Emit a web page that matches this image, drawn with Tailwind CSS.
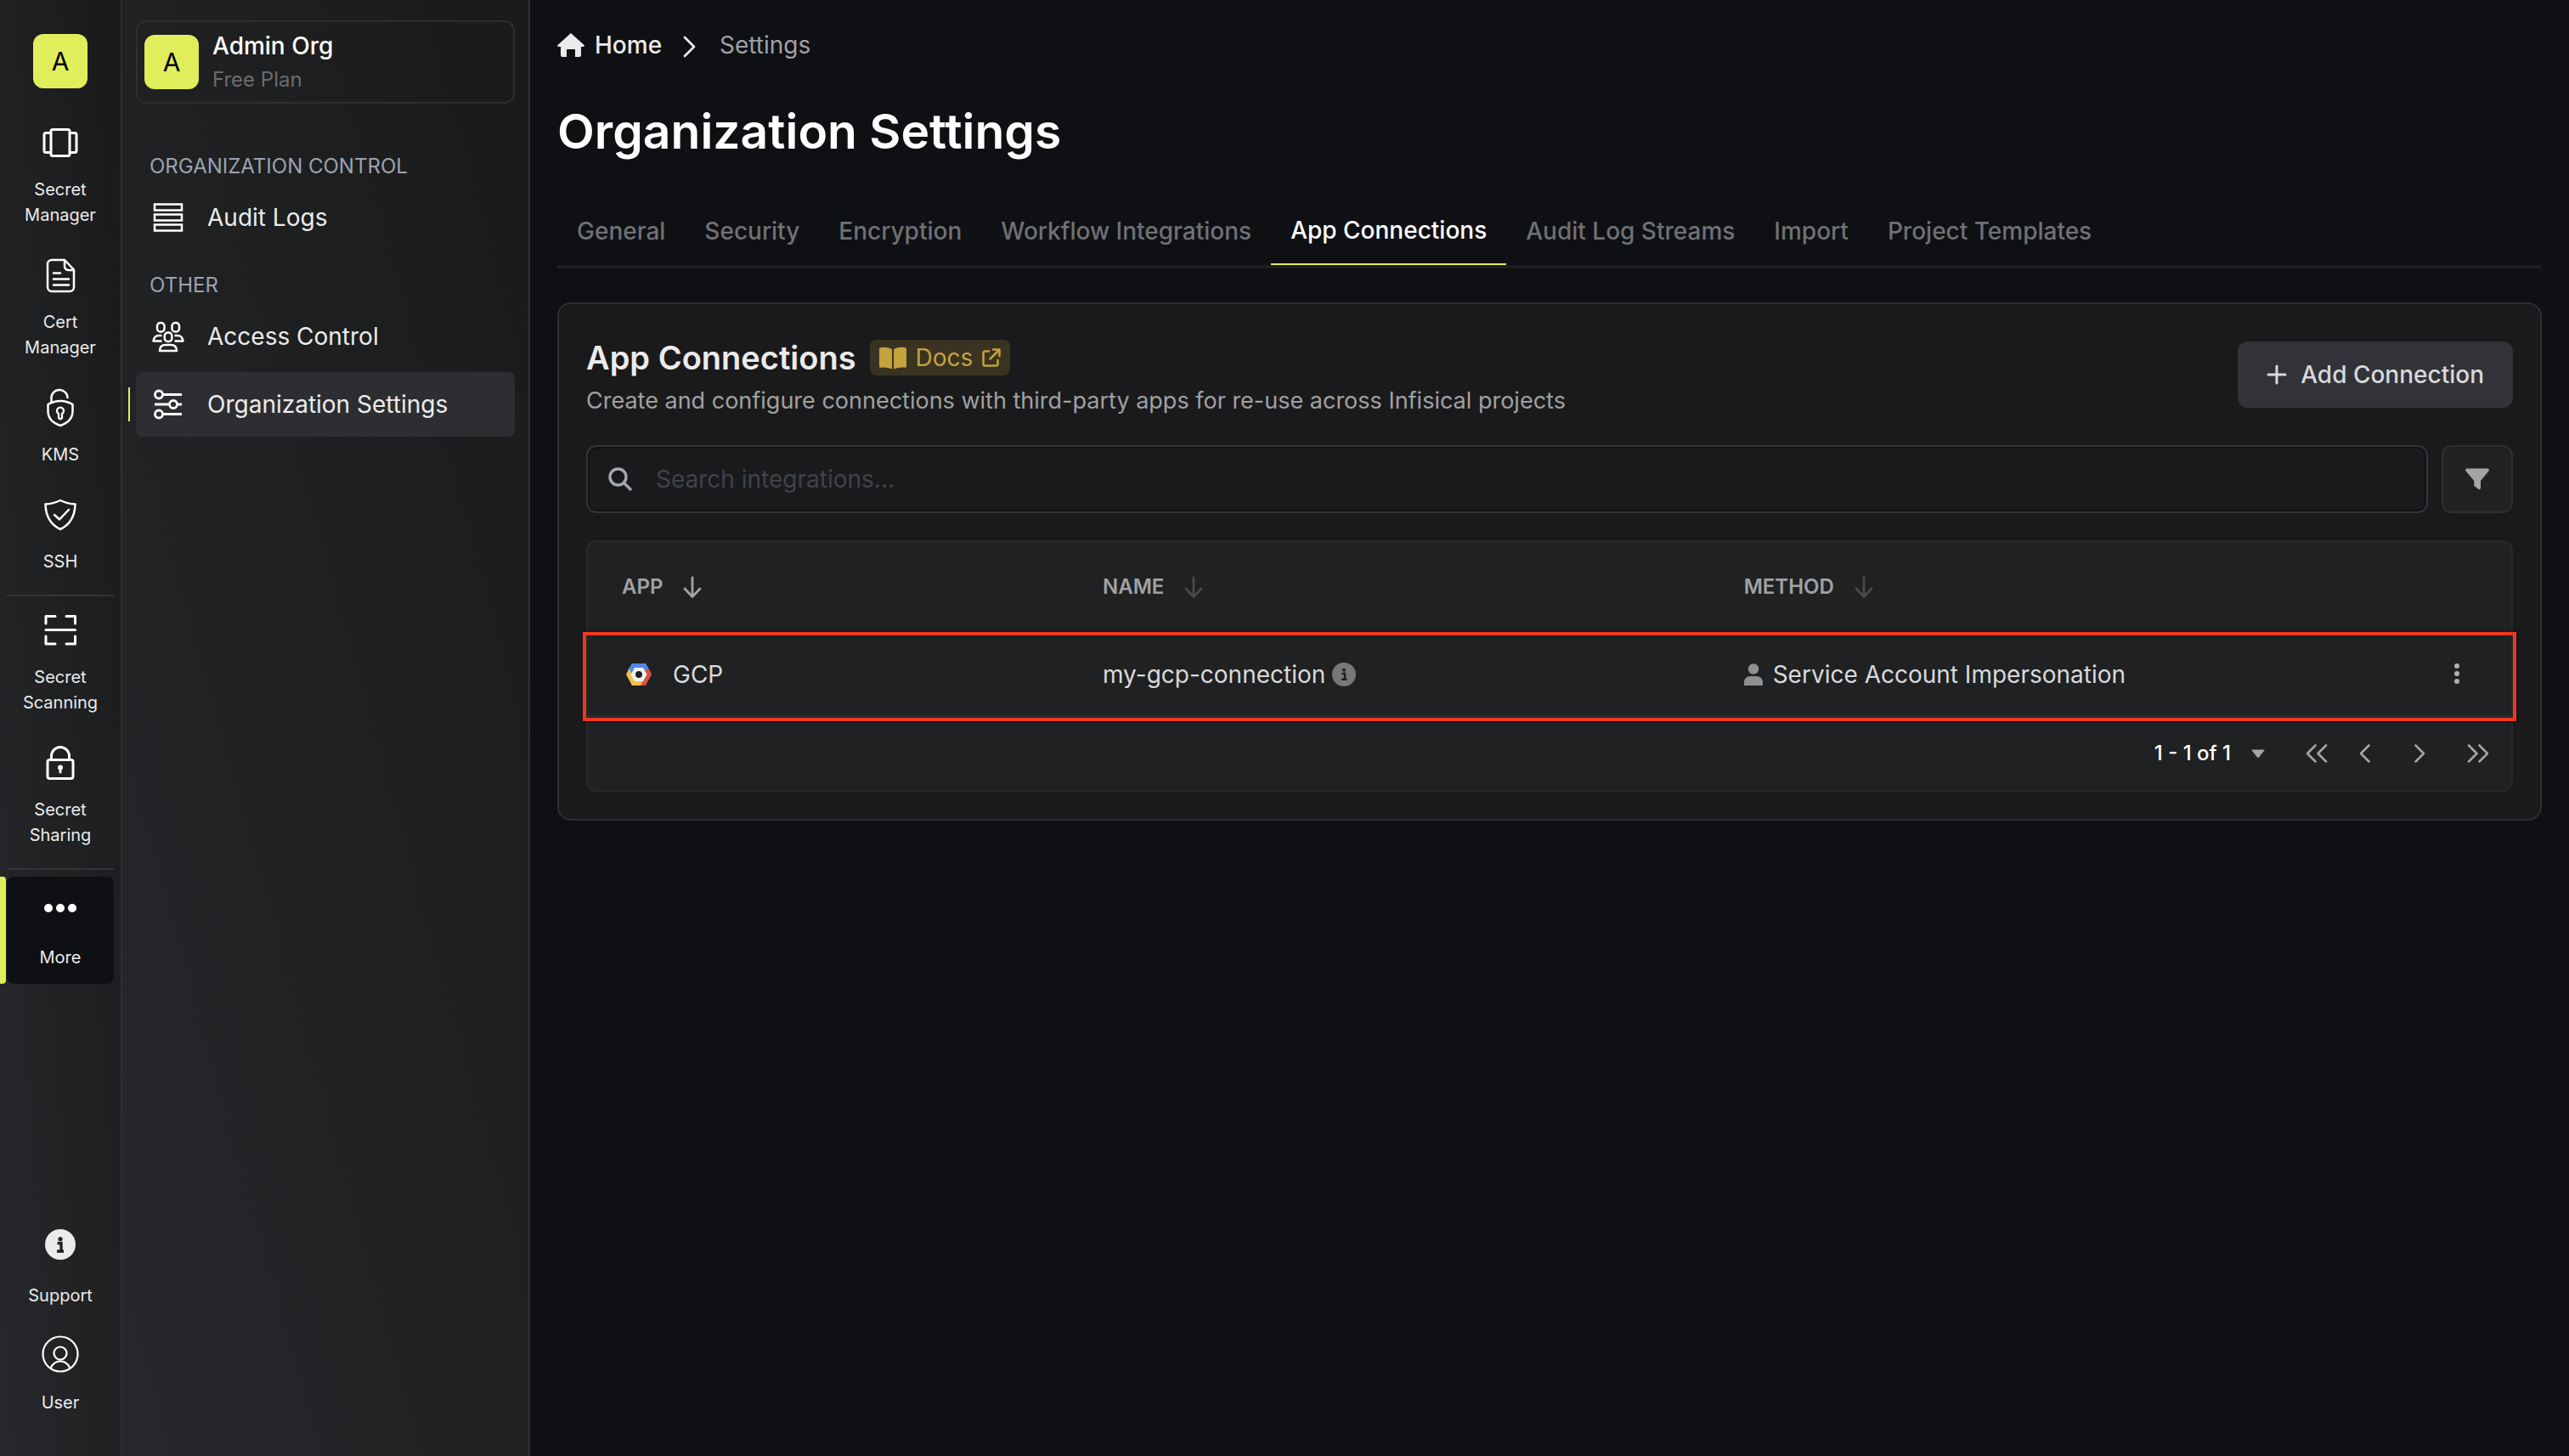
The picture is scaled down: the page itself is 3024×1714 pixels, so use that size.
<!DOCTYPE html>
<html lang="en">
<head>
<meta charset="utf-8">
<title>Organization Settings</title>
<script src="https://cdn.jsdelivr.net/npm/@tailwindcss/browser@4"></script>
</head>
<body class="flex min-h-screen bg-[#0e1014] font-[Inter,sans-serif] text-[28px] leading-[42px] text-[#ebebeb]">

<!-- Product rail -->
<nav aria-label="Products" class="flex w-36 shrink-0 flex-col border-r-2 border-[#2d2f33] bg-linear-to-tr from-[#27282c] via-[#1f2122] to-[#1a1a1b] pt-10 pb-8 text-center text-[20px] leading-[30px]">
  <a href="#" class="mx-auto mb-6 flex size-16 items-center justify-center rounded-xl bg-[#e1ee5c] text-[30px] text-black">A</a>
  <a href="#" class="flex flex-col items-center gap-4 py-4">
    <svg class="size-12" viewBox="0 0 48 48" fill="none" stroke="#fff" stroke-width="3"><rect x="13" y="8.500" width="22" height="31" rx="2"/><path d="M13 12.500H7a2 2 0 0 0-2 2v19a2 2 0 0 0 2 2h6M35 12.500h6a2 2 0 0 1 2 2v19a2 2 0 0 1-2 2h-6"/></svg>
    <span>Secret<br>Manager</span>
  </a>
  <a href="#" class="flex flex-col items-center gap-4 py-4">
    <svg class="size-12" viewBox="0 0 48 48" fill="none" stroke="#fff" stroke-width="2.500" stroke-linecap="round" stroke-linejoin="round"><path d="M29 6H14a5 5 0 0 0-5 5v27a5 5 0 0 0 5 5h21a5 5 0 0 0 5-5V17.500L29 6ZM29 6v8a5 5 0 0 0 5 4h5.500M16 21.500h8M16 28.500h18M16 35.500h18"/></svg>
    <span>Cert<br>Manager</span>
  </a>
  <a href="#" class="flex flex-col items-center gap-4 py-4">
    <svg class="size-12 overflow-visible" viewBox="0 0 48 48" fill="none" stroke="#fff" stroke-width="2.500" stroke-linecap="round" stroke-linejoin="round"><path d="M13.500 18v-5a9.500 9.500 0 0 1 19-1M9.500 20q14.500-8 29 0v8q0 12-14.500 17Q9.500 40 9.500 28Z"/><path d="M22 31v5q2 2.500 4 0v-5a4 4 0 1 0-4 0Z" stroke-width="2.300"/></svg>
    <span>KMS</span>
  </a>
  <a href="#" class="mb-2 flex flex-col items-center gap-4 py-4">
    <svg class="size-12" viewBox="0 0 48 48" fill="none" stroke="#fff" stroke-width="2.500" stroke-linecap="round" stroke-linejoin="round"><path d="M24 7q8 4 17.500 4.500Q41 33 24 41Q7 33 6.500 11.500Q16 11 24 7Z"/><path d="m17 24 6 5.500L34 18"/></svg>
    <span>SSH</span>
  </a>
  <hr class="mx-2 border-t-2 border-[#323439]">
  <a href="#" class="flex flex-col items-center gap-4 py-4">
    <svg class="size-12" viewBox="0 0 48 48" fill="none" stroke="#fff" stroke-width="3" stroke-linecap="round" stroke-linejoin="round"><path d="M7 16V7.500h11M31 7.500h10.500V16M7 31v9h11M31 40h10.500v-9M7 23.500h34.500"/></svg>
    <span>Secret<br>Scanning</span>
  </a>
  <a href="#" class="mb-2 flex flex-col items-center gap-4 py-4">
    <svg class="size-12" viewBox="0 0 48 48" fill="none" stroke="#fff" stroke-width="3"><rect x="9" y="20.500" width="30" height="22" rx="2.500"/><path d="M13.500 20v-4a10.500 10.500 0 0 1 21 0v4"/><path d="M24 29v6" stroke-linecap="round"/><circle cx="24" cy="29.500" r="1.500"/></svg>
    <span>Secret<br>Sharing</span>
  </a>
  <hr class="mx-2 mb-2 border-t-2 border-[#323439]">
  <div class="flex gap-px pr-2">
    <span class="w-[7px] rounded-r-sm bg-[#e1ee5c]"></span>
    <a href="#" class="flex grow flex-col items-center gap-4 rounded-lg bg-[#0e1014] py-4">
      <svg class="size-12" viewBox="0 0 48 48" fill="#fff"><circle cx="10" cy="21" r="5"/><circle cx="24" cy="21" r="5"/><circle cx="38" cy="21" r="5"/></svg>
      <span>More</span>
    </a>
  </div>
  <a href="#" class="mt-auto flex flex-col items-center gap-4 py-4">
    <svg class="size-12" viewBox="0 0 48 48"><circle cx="24" cy="19" r="18" fill="#ebebeb"/><circle cx="24" cy="12.500" r="2.600" fill="#1f2122"/><path d="M20.500 17.500H25v9M20 27h8" fill="none" stroke="#1f2122" stroke-width="3.400"/></svg>
    <span>Support</span>
  </a>
  <a href="#" class="flex flex-col items-center gap-4 py-4">
    <svg class="size-12" viewBox="0 0 48 48" fill="none" stroke="#fff" stroke-width="2.200"><circle cx="24" cy="22" r="20.500"/><circle cx="24" cy="21" r="7.500"/><path d="M12.500 39a12 12 0 0 1 23 0"/></svg>
    <span>User</span>
  </a>
</nav>

<!-- Organization menu -->
<aside class="flex w-[480px] shrink-0 flex-col border-r-2 border-[#2d2f33] bg-linear-to-tr from-[#27282c] via-[#1f2122] to-[#1a1a1b] px-4 pt-6">
  <button type="button" class="flex h-[98px] items-center gap-4 rounded-xl border-2 border-[#2b2f31] px-2 text-left">
    <span class="flex size-16 items-center justify-center rounded-xl bg-[#e1ee5c] text-[30px] text-black">A</span>
    <span class="flex flex-col gap-0.5">
      <span class="leading-10 font-medium text-white">Admin Org</span>
      <span class="text-[24px] leading-9 text-[#6b6c6e]">Free Plan</span>
    </span>
  </button>
  <h2 class="mt-14 px-4 text-[24px] leading-9 text-[#9ca3af]">ORGANIZATION CONTROL</h2>
  <a href="#" class="mt-1 flex h-[76px] items-center gap-7 px-5">
    <svg class="size-9" viewBox="0 0 36 36" fill="none" stroke="#fff" stroke-width="2.500"><path d="M2 2.500h32v7H2zM2 14.500h32v7H2zM2 26.500h32v7H2z"/></svg>
    Audit Logs
  </a>
  <h2 class="mt-6 px-4 text-[24px] leading-9 text-[#9ca3af]">OTHER</h2>
  <a href="#" class="mt-1 flex h-[76px] items-center gap-7 px-5">
    <svg class="size-9 overflow-visible" viewBox="0 0 36 36" fill="none" stroke="#fff" stroke-width="2.500" stroke-linejoin="round"><rect x="5" y="2" width="8.500" height="10.500" rx="3.800"/><rect x="22.500" y="2" width="8.500" height="10.500" rx="3.800"/><rect x="13.800" y="13.500" width="8.500" height="10.500" rx="3.800"/><path d="M10.500 17H7q-5.500 0-6.500 6.500h10M25.500 17H29q5.500 0 6.500 6.500h-10M8 35q0-7 7-7h6q7 0 7 7Z"/></svg>
    Access Control
  </a>
  <a href="#" aria-current="page" class="relative mt-1 flex h-[76px] items-center gap-7 rounded-lg bg-[#2d2e32] px-5">
    <span class="absolute top-[18px] -left-[9px] h-10 w-0.5 bg-[#e1ee5c]"></span>
    <svg class="size-9" viewBox="0 0 36 36" fill="none" stroke="#fff" stroke-width="2.800"><circle cx="7" cy="6.500" r="4.500"/><circle cx="24" cy="18" r="4.500"/><circle cx="7" cy="29.500" r="4.500"/><path d="M11.500 6.500H34M2 18h17.500M28.500 18H34M11.500 29.500H34"/></svg>
    Organization Settings
  </a>
</aside>

<main class="flex min-w-0 grow flex-col px-8 pt-8">
  <nav aria-label="Breadcrumb" class="flex items-center">
    <a href="#" class="flex items-center gap-3 font-medium">
      <svg class="size-8" viewBox="0 0 32 32" fill="#ebebeb"><path d="M16 2 31.500 16q.8 1.800-1 2H28v10q0 2-2 2h-5v-8q0-1-1-1h-8q-1 0-1 1v8H6q-2 0-2-2V18H1.500q-1.800-.2-1-2Z"/></svg>
      Home
    </a>
    <svg class="mx-6 h-8 w-5" viewBox="0 0 20 32" fill="none" stroke="#ebebeb" stroke-width="2.800" stroke-linecap="round" stroke-linejoin="round"><path d="m3 7 11 11L3 29"/></svg>
    <span class="text-[#a0a1a2]">Settings</span>
  </nav>
  <h1 class="mt-9 text-[57px] leading-[90px] font-semibold text-white">Organization Settings</h1>
  <div role="tablist" class="mt-8 flex border-b-4 border-[#1d1e21] font-medium text-[#707174]">
    <button type="button" role="tab" class="h-20 px-[23px]">General</button>
    <button type="button" role="tab" class="h-20 px-[23px]">Security</button>
    <button type="button" role="tab" class="h-20 px-[23px]">Encryption</button>
    <button type="button" role="tab" class="h-20 px-[23px]">Workflow Integrations</button>
    <button type="button" role="tab" aria-selected="true" class="h-20 border-b-2 border-[#e1ee5c] px-[23px] text-white">App Connections</button>
    <button type="button" role="tab" class="h-20 px-[23px]">Audit Log Streams</button>
    <button type="button" role="tab" class="h-20 px-[23px]">Import</button>
    <button type="button" role="tab" class="h-20 px-[23px]">Project Templates</button>
  </div>

  <section class="mt-10 rounded-2xl border-2 border-[#2d2f33] bg-[#1a1a1c] p-8">
    <div class="flex items-center justify-between">
      <div>
        <div class="flex h-[62px] items-center gap-4">
          <h2 class="text-[38px] leading-[60px] font-semibold">App Connections</h2>
          <a href="#" class="flex h-[42px] items-center gap-[11px] rounded-lg bg-[#3a3322] px-[11px] text-[#c4a23c]">
            <svg class="h-7 w-8" viewBox="0 0 32 28" fill="#c4a23c"><path d="M15 4Q9 1 2 2 0 2.300 0 4v20.500Q0 26 2 25.700 9 25 15 27.500ZM17 4q6-3 13-2 2 .3 2 2v20.500q0 1.500-2 1.200-7-.7-13 1.800Z"/></svg>
            Docs
            <svg class="size-[22px]" viewBox="0 0 22 22" fill="none" stroke="#c4a23c" stroke-width="2.500" stroke-linecap="round" stroke-linejoin="round"><path d="M8 3.500H3.500a2 2 0 0 0-2 2v13a2 2 0 0 0 2 2h13a2 2 0 0 0 2-2V14M13 1.500h7.500V9M20 2 9.500 12.500"/></svg>
          </a>
        </div>
        <p class="text-[27px] leading-10 text-[#a0a1a2]">Create and configure connections with third-party apps for re-use across Infisical projects</p>
      </div>
      <button type="button" class="flex h-[78px] items-center gap-4 rounded-xl bg-[#323338] px-[34px] font-medium text-[#d8d9db]">
        <svg class="size-6" viewBox="0 0 24 24" fill="none" stroke="#d8d9db" stroke-width="3" stroke-linecap="round"><path d="M12 2v20M2 12h20"/></svg>
        Add Connection
      </button>
    </div>

    <div class="mt-8 flex gap-4">
      <label class="flex h-20 grow items-center gap-7 rounded-xl border-2 border-[#33343a] px-6 inset-ring-2 inset-ring-[#111115]">
        <svg class="size-7" viewBox="0 0 28 28" fill="none" stroke="#a3a8b0" stroke-width="3.400" stroke-linecap="round"><circle cx="11.500" cy="11.500" r="9.500"/><path d="m18.500 18.500 7.500 7.500"/></svg>
        <input type="text" aria-label="Search integrations" placeholder="Search integrations..." class="grow bg-transparent outline-none placeholder:text-[#41424b]">
      </label>
      <button type="button" aria-label="Filter" class="flex h-20 w-[84px] items-center justify-center rounded-xl border-2 border-[#2d2f31] bg-[#1f2122]">
        <svg class="size-7" viewBox="0 0 28 28" fill="#a3a4a5"><path d="M1.800 1.500h24.400q2.600.8 1.300 3L18 16v8.500q-.5 2.500-2.700 1.300L11 22.500q-.8-.7-.8-1.800V16L.5 4.500q-1.300-2.200 1.300-3Z"/></svg>
      </button>
    </div>

    <div class="relative mt-8 rounded-xl border-2 border-[#27292b] bg-[#1f2122]">
      <!-- Highlight around the connection row -->
      <div class="pointer-events-none absolute -inset-x-1.5 top-[106px] h-[105px] border-4 border-[#f0371f] shadow-[0_0_4px_#0009]"></div>
      <table class="w-full table-fixed text-left">
        <thead>
          <tr class="h-[106px] border-b-2 border-[#1f2e32] text-[24px] leading-9 text-[#a0a1a2]">
            <th class="w-1/4 px-10 font-semibold"><button type="button" class="flex items-center gap-6">APP <svg class="h-7 w-6" viewBox="0 0 24 28" fill="none" stroke="#a3a4a5" stroke-width="2.800" stroke-linecap="round" stroke-linejoin="round"><path d="M11 3v22M2 16l9 9.500 9-9.500"/></svg></button></th>
            <th class="w-1/3 px-10 font-semibold"><button type="button" class="flex items-center gap-6">NAME <svg class="h-7 w-6" viewBox="0 0 24 28" fill="none" stroke="#48494b" stroke-width="2.800" stroke-linecap="round" stroke-linejoin="round"><path d="M11 3v22M2 16l9 9.500 9-9.500"/></svg></button></th>
            <th class="px-10 font-semibold"><button type="button" class="flex items-center gap-6">METHOD <svg class="h-7 w-6" viewBox="0 0 24 28" fill="none" stroke="#48494b" stroke-width="2.800" stroke-linecap="round" stroke-linejoin="round"><path d="M11 3v22M2 16l9 9.500 9-9.500"/></svg></button></th>
            <th class="w-32"></th>
          </tr>
        </thead>
        <tbody>
          <tr class="h-[99px] border-b-2 border-[#293033] text-[#d8d9db]">
            <td class="px-10"><div class="flex items-center gap-5">
              <svg class="size-10" viewBox="0 0 40 40"><path d="M12 7h16l6.500 11.500L28 20 20 14l-7 5-6-4Z" fill="#557ebf"/><path d="M12 7h16l3.500 6-5 4H14l-4 3-1.500-7Z" fill="#4f86ec"/><path d="M31.500 13 35 20l-7 13h-8l7-13-1-4Z" fill="#d9503f"/><path d="M8.500 13 5 20l7 13h10l3-6H15l-3-7Z" fill="#f2c04b"/><path d="M15 12h10l4.500 8L25 28H15l-4.500-8Z" fill="#f1f1f1"/><circle cx="20" cy="20" r="4" fill="#1f2122"/></svg>
              GCP</div></td>
            <td class="px-10"><div class="flex items-center gap-2">my-gcp-connection
              <svg class="size-7" viewBox="0 0 28 28"><circle cx="14" cy="14" r="14" fill="#77787a"/><circle cx="14" cy="8.700" r="2" fill="#1f2122"/><path d="M11.500 13H15v6.500M11 19.800h6.500" fill="none" stroke="#1f2122" stroke-width="2.500"/></svg></div></td>
            <td class="px-10"><div class="flex items-center gap-3 whitespace-nowrap">
              <svg class="h-[26px] w-[22px]" viewBox="0 0 22 26" fill="#8f9091"><circle cx="11" cy="6.500" r="6.200"/><path d="M0 26v-3q0-8 8-8h6q8 0 8 8v3Z"/></svg>
              Service Account Impersonation</div></td>
            <td class="pl-15"><button type="button" aria-label="Row actions" class="block"><svg class="h-7 w-2" viewBox="0 0 8 28" fill="#b0b1b3"><circle cx="4" cy="4" r="3"/><circle cx="4" cy="13" r="3"/><circle cx="4" cy="22" r="3"/></svg></button></td>
          </tr>
        </tbody>
      </table>
      <div class="flex h-[86px] items-center justify-end pr-[26px]">
        <button type="button" class="flex items-center gap-6 text-[24px] leading-9 font-medium text-white">1 - 1 of 1
          <svg class="h-3 w-4" viewBox="0 0 16 12" fill="#a3a4a5"><path d="M1 1.500h14q1 0 .3 1L9 10.500q-1 1-2 0L.7 2.500q-.7-1 .3-1Z"/></svg></button>
        <button type="button" aria-label="First page" class="ml-12"><svg class="block h-6 w-[26px]" viewBox="0 0 26 24" fill="none" stroke="#a3a4a5" stroke-width="2.600" stroke-linecap="round" stroke-linejoin="round"><path d="M11.500 2.500 2 12l9.500 9.500M24 2.500 14.500 12l9.500 9.500"/></svg></button>
        <button type="button" aria-label="Previous page" class="ml-9"><svg class="block h-6 w-4" viewBox="0 0 16 24" fill="none" stroke="#a3a4a5" stroke-width="2.600" stroke-linecap="round" stroke-linejoin="round"><path d="M12.500 2.500 3 12l9.500 9.500"/></svg></button>
        <button type="button" aria-label="Next page" class="ml-12"><svg class="block h-6 w-4" viewBox="0 0 16 24" fill="none" stroke="#a3a4a5" stroke-width="2.600" stroke-linecap="round" stroke-linejoin="round"><path d="M3.500 2.500 13 12l-9.500 9.500"/></svg></button>
        <button type="button" aria-label="Last page" class="ml-12"><svg class="block h-6 w-[26px]" viewBox="0 0 26 24" fill="none" stroke="#a3a4a5" stroke-width="2.600" stroke-linecap="round" stroke-linejoin="round"><path d="M2 2.500 11.500 12 2 21.500M14.500 2.500 24 12l-9.500 9.500"/></svg></button>
      </div>
    </div>
  </section>
</main>
</body>
</html>
